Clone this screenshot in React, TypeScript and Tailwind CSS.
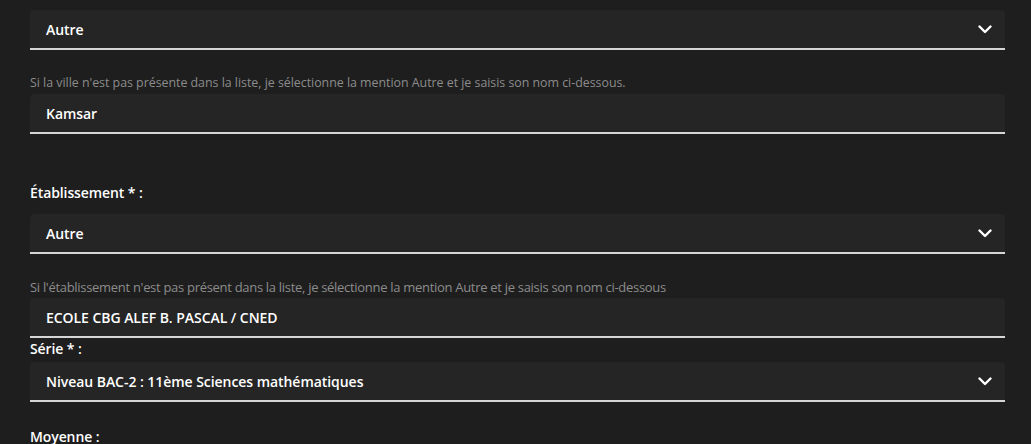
import React from 'react';

const font = { fontFamily: '"Open Sans", "Noto Sans", sans-serif' };

function Chevron() {
  return (
    <svg width="14" height="9" viewBox="0 0 14 9" fill="none" aria-hidden="true">
      <polyline points="1.5,1.5 7,7 12.5,1.5" stroke="#ffffff" strokeWidth="2.4" strokeLinecap="round" strokeLinejoin="round" />
    </svg>
  );
}

function SelectBox({ value }: { value: string }) {
  return (
    <div className="flex h-10 items-center justify-between rounded-t-[4px] border-b-2 border-[#d6d6d6] bg-[#252525] pl-4 pr-[13px]">
      <span className="text-[14px] font-semibold tracking-[-0.05px] text-white">{value}</span>
      <Chevron />
    </div>
  );
}

function TextBox({ value }: { value: string }) {
  return (
    <div className="flex h-10 items-center rounded-t-[4px] border-b-2 border-[#d6d6d6] bg-[#252525] pl-4">
      <span className="text-[14px] font-semibold tracking-[-0.05px] text-white">{value}</span>
    </div>
  );
}

function Label({ children }: { children: React.ReactNode }) {
  return <p className="text-[14px] font-semibold leading-5 tracking-[-0.1px] text-white">{children}</p>;
}

export default function App() {
  return (
    <div className="h-[444px] w-[1031px] overflow-hidden bg-[#1e1e1e]" style={font}>
      <div className="ml-[30px] flex w-[975px] flex-col pt-[10px]">
        <SelectBox value="Autre" />
        <p className="mt-[25px] mb-[3px] text-[12.4px] leading-4 tracking-[-0.02px] text-[#8c8c8c]">
          Si la ville n'est pas présente dans la liste, je sélectionne la mention Autre et je saisis son nom ci-dessous.
        </p>
        <TextBox value="Kamsar" />

        <div className="mt-[49px] mb-[11px]">
          <Label>Établissement * :</Label>
        </div>
        <SelectBox value="Autre" />
        <p className="mt-[25px] mb-[3px] text-[13px] leading-4 tracking-[-0.3px] text-[#8c8c8c]">
          Si l'établissement n'est pas présent dans la liste, je sélectionne la mention Autre et je saisis son nom ci-dessous
        </p>
        <TextBox value="ECOLE CBG ALEF B. PASCAL / CNED" />

        <div className="mt-[1px] mb-[3px]">
          <Label>Série * :</Label>
        </div>
        <SelectBox value="Niveau BAC-2 : 11ème Sciences mathématiques" />

        <div className="mt-[25px]">
          <Label>Moyenne :</Label>
        </div>
      </div>
    </div>
  );
}
